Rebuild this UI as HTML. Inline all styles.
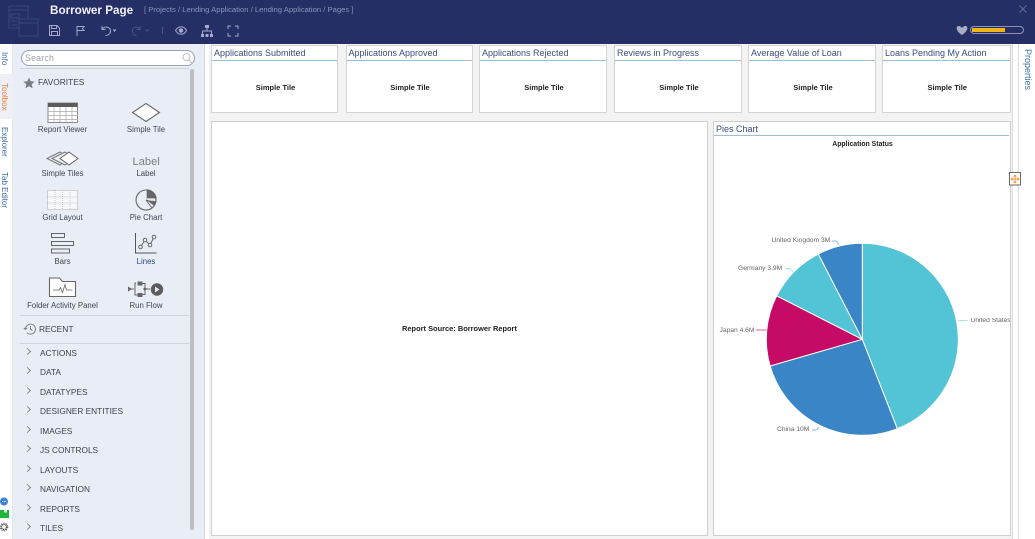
<!DOCTYPE html>
<html><head><meta charset="utf-8">
<style>
html,body{margin:0;padding:0;background:#fff}
body{width:1035px;height:539px;position:relative;overflow:hidden;font-family:"Liberation Sans",sans-serif}
.a{position:absolute}
.t{position:absolute;white-space:nowrap;line-height:1}
.lb{font-size:7.8px;color:#3f4652;width:100px;text-align:center}
.tile{position:absolute;top:45px;height:68px;background:#fff;border:1px solid #d4d4d4;box-sizing:border-box}
.tile i{position:absolute;left:0;right:0;top:14px;height:1px;background:#9dbfdc}
.tile span{position:absolute;left:2px;top:2px;font-size:9px;color:#3d4a80;white-space:nowrap}
.tile b{position:absolute;left:2px;right:0;top:37px;text-align:center;font-size:7.500px;color:#222}
.cat{position:absolute;left:40px;font-size:8.3px;color:#3c4250;white-space:nowrap;line-height:1}
.chev{position:absolute;left:25px;width:4px;height:4px;border-top:1px solid #8a8a8a;border-right:1px solid #8a8a8a;transform:rotate(45deg)}
.v{position:absolute;writing-mode:vertical-rl;font-size:8px;white-space:nowrap;line-height:1;color:#3b6ea8}
.pl{position:absolute;white-space:nowrap;line-height:1;font-size:6.7px;color:#666}
</style></head><body>
<!-- header -->
<div class="a" style="left:0;top:0;width:1035px;height:44px;background:#252f66"></div>
<svg class="a" style="left:0;top:0" width="1035" height="44" fill="none">
 <g stroke="#3c4679" stroke-width="1">
  <path d="M9 6h19v12M9 6v22h10M9 10h19M11 14h8v4h-8zM11 21h6M11 25h6"/>
  <rect x="19" y="19" width="19" height="17"/><path d="M19 23h19"/>
 </g>
 <g stroke="#a3a9c6" stroke-width="1">
  <path d="M49.500 25.500h7.500l2.500 2.500v7.500h-10zM51.500 25.500v3h5v-3M51.500 35.500v-4h6v4"/>
  <path d="M77 36V26M77 26.500h7l-1.500 2 1.500 2h-7"/>
  <path d="M102 26v3.500h3.500M102.500 29c2-3 8-2.500 8 2 0 3-2.500 4.500-5 4.500"/>
  <path d="M140 26v3.500h-3.500M139.500 29c-2-3-7-2.500-7 2 0 3 2 4.500 4 4.500" stroke="#4a5384"/>
  <path d="M162.500 27v7" stroke="#4f5888"/>
  <path d="M175.500 30.500c3-5 8.500-5 11 0-2.500 5-8 5-11 0z"/>
  <circle cx="181" cy="30.500" r="1.800" fill="#a3a9c6"/>
  <path d="M207 28v3M202.500 34v-3h9v3" />
  <path d="M228 29v-3h3M235 26h3v3M238 33v3h-3M231 36h-3v-3"/>
 </g>
 <g fill="#a3a9c6"><rect x="205" y="25" width="4" height="3"/><rect x="201" y="34" width="3" height="3"/><rect x="205.500" y="34" width="3" height="3"/><rect x="210" y="34" width="3" height="3"/>
  <path d="M112.500 29.500h4l-2 2.500z"/></g>
 <path d="M145 29.500h4l-2 2.500z" fill="#4a5384"/>
 <path d="M1019.500 5.500l7 7M1026.500 5.500l-7 7" stroke="#5d6590" stroke-width="1.100"/>
 <path d="M962 35c-7-4.500-6-9-3.500-9 1.800 0 2.800 1 3.500 2 .7-1 1.700-2 3.500-2 2.500 0 3.500 4.500-3.500 9z" fill="#a9adc4"/>
 <rect x="970.500" y="26.500" width="53" height="7" rx="3.500" stroke="#8c92b0"/>
 <rect x="972" y="28" width="33" height="4" fill="#f0b71a"/>
</svg>
<div class="t" style="left:50px;top:5px;font-size:11.7px;font-weight:bold;color:#f1f2f7">Borrower Page</div>
<div class="t" style="left:144px;top:6px;font-size:7.650px;color:#8d93b4">[ Projects / Lending Application / Lending Application / Pages ]</div>

<!-- left tabs -->
<div class="a" style="left:0;top:44px;width:13px;height:495px;background:#fff;border-right:1px solid #e2e5ec;box-sizing:border-box"></div>
<div class="a" style="left:0;top:74px;width:13px;height:45px;background:#eef0f5"></div>
<div class="v" style="left:0;top:52px">Info</div>
<div class="v" style="left:0;top:83px;color:#ee7c3f">Toolbox</div>
<div class="v" style="left:0;top:127px">Explorer</div>
<div class="v" style="left:0;top:172px">Tab Editor</div>
<svg class="a" style="left:0;top:495px" width="12" height="44">
 <circle cx="4" cy="6.500" r="4" fill="#3f84d8"/><path d="M2 6.500h4" stroke="#fff" stroke-dasharray="1 .7"/>
 <rect x="0" y="15" width="9" height="8" fill="#1fb53c"/><rect x="4" y="15" width="3" height="2.500" fill="#d4f5d8"/>
 <circle cx="4" cy="32" r="2.600" fill="none" stroke="#444" stroke-width="1.400" stroke-dasharray="1.300 .6"/><circle cx="4" cy="32" r="3.900" fill="none" stroke="#444" stroke-width=".8" stroke-dasharray="1.300 1.200"/>
</svg>

<!-- toolbox -->
<div class="a" style="left:13px;top:44px;width:192px;height:495px;background:#e9edf5;border-right:1px solid #d5d8de;box-sizing:border-box"></div>
<div class="a" style="left:21px;top:50px;width:174px;height:16px;border:1px solid #9aa0bd;border-radius:8px;background:#fff;box-sizing:border-box"></div>
<div class="t" style="left:25px;top:53.500px;font-size:8.800px;color:#a0a3ab;letter-spacing:.2px">Search</div>
<svg class="a" style="left:181px;top:52px" width="13" height="12" fill="none" stroke="#bcbfc6"><circle cx="5.500" cy="5" r="3.500"/><path d="M8 8l3 3"/></svg>
<div class="a" style="left:20px;top:68px;width:169px;height:1px;background:#cfd3da"></div>
<div class="a" style="left:190px;top:69px;width:4px;height:461px;background:#bdbfc4;border-radius:2px"></div>
<svg class="a" style="left:23px;top:77px" width="12" height="12"><path d="M6 .5l1.700 3.700 4 .4-3 2.700.9 4L6 9.300l-3.600 2 .9-4-3-2.700 4-.4z" fill="#7b7d84"/></svg>
<div class="t" style="left:38px;top:78px;font-size:8.4px;color:#3c4250">FAVORITES</div>

<div class="t lb" style="left:12.500px;top:126px">Report Viewer</div>
<div class="t lb" style="left:96px;top:126px">Simple Tile</div>
<div class="t lb" style="left:12.500px;top:170px">Simple Tiles</div>
<div class="t lb" style="left:96px;top:170px">Label</div>
<div class="t lb" style="left:12.500px;top:214px">Grid Layout</div>
<div class="t lb" style="left:96px;top:214px">Pie Chart</div>
<div class="t lb" style="left:12.500px;top:258px">Bars</div>
<div class="t lb" style="left:96px;top:258px;color:#2b4c80">Lines</div>
<div class="t lb" style="left:12.500px;top:302px">Folder Activity Panel</div>
<div class="t lb" style="left:96px;top:302px">Run Flow</div>
<div class="t" style="left:132.500px;top:156.500px;font-size:11px;color:#7a7e84;letter-spacing:.1px">Label</div>

<svg class="a" style="left:0;top:90px" width="205" height="225" fill="none" stroke="#666" stroke-width="1">
 <!-- report viewer -->
 <rect x="48" y="13" width="29.500" height="19.500" fill="#fff" stroke="#8a8a8a"/>
 <rect x="48" y="13" width="29.500" height="4" fill="#5c5c5c" stroke="none"/>
 <path d="M48 21.500h30M48 25.500h30M48 29.500h30M54 17v15M60 17v15M66 17v15M72 17v15" stroke="#aaa" stroke-width=".7"/>
 <!-- simple tile -->
 <path d="M146 13.500l13.500 9-13.500 9-13.500-9z" fill="#fff" stroke="#666" stroke-width="1.100"/>
 <!-- simple tiles -->
 <path d="M60 62l9 6.500-9 6.500-13-6.500z" fill="#e9edf5" stroke="#777"/>
 <path d="M65 62l9 6.500-9 6.500-13-6.500z" fill="#e9edf5" stroke="#777"/>
 <path d="M69 62l9 6.500-9 6.500-9-6.500z" fill="#fff" stroke="#666"/>
 <!-- grid -->
 <rect x="47.500" y="100.500" width="30" height="19" stroke="#999" stroke-width=".8" stroke-dasharray="1 1" fill="#f7f8fb"/>
 <path d="M47.500 107h30M47.500 113h30M55 100v20M62.500 100v20M70 100v20" stroke="#bbb" stroke-width=".8" stroke-dasharray="1 1"/>
 <!-- pie -->
 <circle cx="146" cy="110" r="10" fill="#e9edf5" stroke="#666" stroke-width="1.100"/>
 <path d="M146.700 99.400a10 10 0 0 1 10 9h-10z" fill="#666" stroke="none"/>
 <path d="M146 110l9.500 3M146 110l6 8" stroke="#666"/>
 <path d="M147 110.500l9 .5a10 10 0 0 1-1.500 5z" fill="#666" stroke="none"/>
 <!-- bars -->
 <rect x="51.500" y="143.500" width="13" height="4" stroke="#666"/><rect x="51.500" y="151.500" width="22" height="4"/><rect x="51.500" y="159" width="18" height="4"/>
 <!-- lines -->
 <path d="M135.500 143v20h21" stroke="#555"/>
 <path d="M140.500 157l4.500-7 5 5 4-8" stroke="#666"/>
 <circle cx="140.500" cy="157" r="1.800" fill="#e9edf5"/><circle cx="145" cy="150" r="1.800" fill="#e9edf5"/><circle cx="150" cy="155" r="1.800" fill="#e9edf5"/><circle cx="154" cy="147" r="1.800" fill="#e9edf5"/>
 <!-- folder -->
 <path d="M49.500 206.500v-18.500h10l3 3.500h13v15z" fill="#fff" stroke="#666" stroke-width="1.100"/>
 <path d="M53 200h6l1.500-2.500 2 5 2.500-8 1.500 5.500h6" stroke="#666" stroke-width=".8"/>
 <!-- run flow -->
 <path d="M128 199h6M136 193h-1v12h4M144 193v0M144 199h6" stroke="#666"/>
 <path d="M128 196.500l4 2.500-4 2.500z" fill="#666" stroke="none"/>
 <rect x="137.500" y="191.500" width="5" height="4" fill="#666" stroke="none"/>
 <rect x="137.500" y="203" width="5" height="4" fill="#666" stroke="none"/>
 <path d="M142 193.500h3v11h-3" stroke="#666"/>
 <path d="M145 197l2 2-2 2-2-2z" fill="#666" stroke="none"/>
 <circle cx="157" cy="199.500" r="6.200" fill="#5c5c5c" stroke="none"/>
 <path d="M155 196.500l4.500 3-4.500 3z" fill="#e9edf5" stroke="none"/>
</svg>

<div class="a" style="left:20px;top:315px;width:169px;height:1px;background:#cfd3da"></div>
<svg class="a" style="left:23px;top:322px" width="14" height="14" fill="none" stroke="#777" stroke-width=".9"><path d="M2.500 7a5 5 0 1 1 1.500 3.700M.8 6l1.700 1.500L4 6M7.500 4v3.300l2 1"/></svg>
<div class="t" style="left:39px;top:325px;font-size:8.4px;color:#3c4250">RECENT</div>
<div class="a" style="left:20px;top:343px;width:169px;height:1px;background:#cfd3da"></div>

<div class="chev" style="top:349px"></div><div class="cat" style="top:349px">ACTIONS</div>
<div class="chev" style="top:368px"></div><div class="cat" style="top:368px">DATA</div>
<div class="chev" style="top:388px"></div><div class="cat" style="top:388px">DATATYPES</div>
<div class="chev" style="top:407px"></div><div class="cat" style="top:407px">DESIGNER ENTITIES</div>
<div class="chev" style="top:427px"></div><div class="cat" style="top:427px">IMAGES</div>
<div class="chev" style="top:446px"></div><div class="cat" style="top:446px">JS CONTROLS</div>
<div class="chev" style="top:466px"></div><div class="cat" style="top:466px">LAYOUTS</div>
<div class="chev" style="top:485px"></div><div class="cat" style="top:485px">NAVIGATION</div>
<div class="chev" style="top:505px"></div><div class="cat" style="top:505px">REPORTS</div>
<div class="chev" style="top:524px"></div><div class="cat" style="top:524px">TILES</div>

<!-- tiles -->
<div class="a" style="left:209px;top:44px;width:803px;height:72px;background:#f3f3f3"></div>
<div class="tile" style="left:211px;width:127px"><span>Applications Submitted</span><i></i><b>Simple Tile</b></div>
<div class="tile" style="left:345.500px;width:127px"><span>Applications Approved</span><i></i><b>Simple Tile</b></div>
<div class="tile" style="left:479px;width:128px"><span>Applications Rejected</span><i></i><b>Simple Tile</b></div>
<div class="tile" style="left:614px;width:128px"><span>Reviews in Progress</span><i></i><b>Simple Tile</b></div>
<div class="tile" style="left:748px;width:128px"><span>Average Value of Loan</span><i></i><b>Simple Tile</b></div>
<div class="tile" style="left:882px;width:128.500px"><span>Loans Pending My Action</span><i></i><b>Simple Tile</b></div>

<!-- main area -->
<div class="a" style="left:209px;top:116px;width:803px;height:423px;background:#f3f3f3"></div>
<div class="a" style="left:211px;top:121px;width:497px;height:415px;background:#fff;border:1px solid #cfcfcf;box-sizing:border-box"></div>
<div class="t" style="left:211px;top:324.500px;width:497px;text-align:center;font-size:7.450px;font-weight:bold;color:#222">Report Source: Borrower Report</div>

<div class="a" style="left:713px;top:121px;width:297.500px;height:415px;background:#fff;border:1px solid #cfcfcf;box-sizing:border-box"></div>
<div class="a" style="left:714px;top:135px;width:295px;height:1px;background:#9dbfdc"></div>
<div class="t" style="left:716px;top:124.500px;font-size:9px;color:#3d4a80">Pies Chart</div>
<div class="t" style="left:713.500px;top:141.500px;width:298px;text-align:center;font-size:6.900px;font-weight:bold;color:#222">Application Status</div>

<svg class="a" style="left:714px;top:136px" width="296" height="399" fill="none">
 <g transform="translate(148.300 203.300)" stroke="#fff" stroke-width="1">
  <path d="M0 0V-96A96 96 0 0 1 35 89.400Z" fill="#52c4d5"/>
  <path d="M0 0L35 89.400A96 96 0 0 1 -92.200 26.700Z" fill="#3a85c6"/>
  <path d="M0 0L-92.200 26.700A96 96 0 0 1 -85.600 -43.500Z" fill="#c60b66"/>
  <path d="M0 0L-85.600 -43.500A96 96 0 0 1 -44 -85.300Z" fill="#52c4d5"/>
  <path d="M0 0L-44 -85.300A96 96 0 0 1 0 -96Z" fill="#3a85c6"/>
 </g>
 <path d="M243.500 185l3-.5h7" stroke="#a6e2ea"/>
 <path d="M42 194h10.500" stroke="#e65a9d"/>
 <path d="M104.500 291c-.5 2.500-1 3-6.500 3" stroke="#8cbce4"/>
 <path d="M71 132.500h4c2 0 3 1 4 4" stroke="#a6e2ea"/>
 <path d="M118 105h3c2 0 3 1 3.500 4" stroke="#8cbce4"/>
</svg>
<div class="pl" style="left:970.500px;top:317.500px;width:39.500px;overflow:hidden">United States</div>
<div class="pl" style="left:719.500px;top:327.500px">Japan 4.6M</div>
<div class="pl" style="left:777px;top:427px">China 10M</div>
<div class="pl" style="left:738px;top:265.500px">Germany 3.9M</div>
<div class="pl" style="left:771.500px;top:238px">United Kingdom 3M</div>

<!-- right strip -->
<div class="a" style="left:1012px;top:44px;width:7px;height:495px;background:#fff;border-left:1px solid #dcdcdc;border-right:1px solid #dcdcdc;box-sizing:border-box"></div>
<div class="v" style="left:1023px;top:49px;font-size:9px;color:#3b6ea8">Properties</div>
<svg class="a" style="left:1009px;top:172px" width="12" height="14" fill="none">
 <rect x=".5" y=".5" width="11" height="12.500" fill="#fff" stroke="#6a6a6a"/>
 <path d="M2 7h8M6 3v8M2 7l1.500-1.500M2 7l1.500 1.500M10 7L8.500 5.500M10 7L8.500 8.500M6 3L4.500 4.500M6 3l1.500 1.500M6 11l-1.500-1.500M6 11l1.500-1.500" stroke="#f5993a"/>
</svg>
</body></html>
